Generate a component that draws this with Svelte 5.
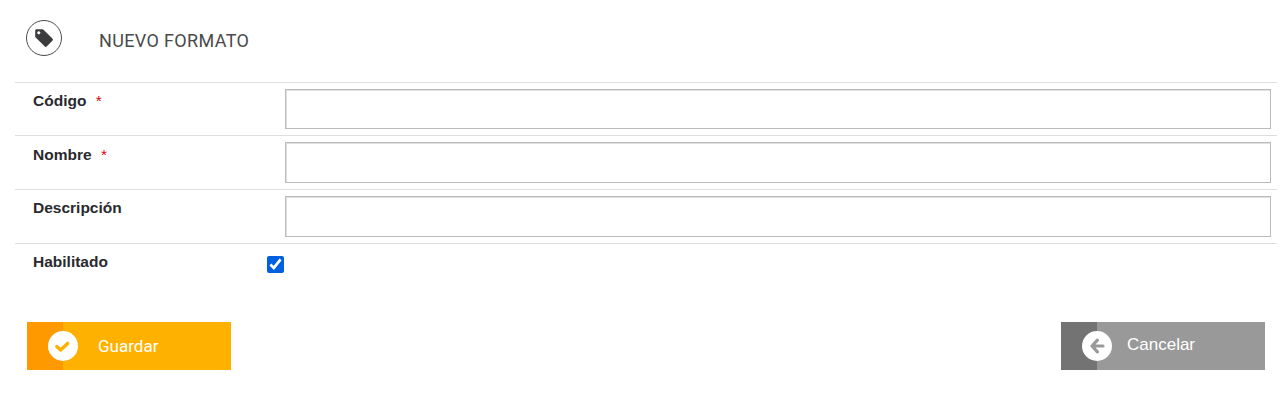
<script>
  let fields = [
    { label: "Código", required: true },
    { label: "Nombre", required: true },
    { label: "Descripción", required: false }
  ];
  let enabled = $state(true);
</script>

<div class="page">
  <div class="header">
    <span class="header_icon">
      <svg width="22" height="22" viewBox="0 0 22 22">
        <path fill="#3c3c3e" fill-rule="evenodd" d="M2.2 3.6 Q2.2 2.2 3.6 2.2 L9.4 2.2 Q10 2.2 10.5 2.7 L19.6 11.8 Q20.4 12.7 19.6 13.6 L13.6 19.6 Q12.7 20.4 11.8 19.6 L2.7 10.5 Q2.2 10 2.2 9.4 Z M5.8 4.2 A1.6 1.6 0 1 0 5.81 4.2 Z" />
      </svg>
    </span>
    <h1>NUEVO FORMATO</h1>
  </div>

  <div class="form">
    {#each fields as field}
      <div class="row">
        <label class="row_label" for={field.label}>
          {field.label}
          {#if field.required}<span class="required">*</span>{/if}
        </label>
        <input class="text_input" id={field.label} type="text" />
      </div>
    {/each}
    <div class="row row_check">
      <label class="row_label" for="habilitado">Habilitado</label>
      <input class="check" id="habilitado" type="checkbox" bind:checked={enabled} />
    </div>
  </div>

  <div class="buttons">
    <button class="btn btn_save">
      <span class="btn_side"></span>
      <span class="btn_circle">
        <svg width="18" height="18" viewBox="0 0 18 18">
          <path d="M2.8 9.6 L6.6 13 L13.6 6.4" fill="none" stroke="#ffb100" stroke-width="3.4" stroke-linecap="round" stroke-linejoin="round" />
        </svg>
      </span>
      <span class="btn_text">Guardar</span>
    </button>
    <button class="btn btn_cancel">
      <span class="btn_side"></span>
      <span class="btn_circle">
        <svg width="18" height="18" viewBox="0 0 18 18">
          <path d="M9.4 3.2 L4 9 L9.4 14.8 M4.4 9 L15 9" fill="none" stroke="#999" stroke-width="3.2" stroke-linecap="round" stroke-linejoin="round" />
        </svg>
      </span>
      <span class="btn_text">Cancelar</span>
    </button>
  </div>
</div>

<style>
  :global(body) {
    background: #fff;
  }
  .page {
    width: 1283px;
    height: 406px;
    padding: 0 6px 0 15px;
    box-sizing: border-box;
    overflow: hidden;
  }
  .header {
    display: flex;
    align-items: center;
    height: 81.6px;
    padding-left: 11px;
    box-sizing: border-box;
  }
  .header_icon {
    display: flex;
    align-items: center;
    justify-content: center;
    width: 36px;
    height: 36px;
    margin-top: -6px;
    border: 1px solid #4a4a4a;
    border-radius: 50%;
    box-sizing: border-box;
  }
  h1 {
    margin: 0 0 0 37px;
    font: 400 18px Roboto, sans-serif;
    letter-spacing: 0.35px;
    color: #4a4a4a;
  }
  .row {
    display: flex;
    align-items: flex-start;
    height: 53.7px;
    padding: 6px 6px 0 18px;
    border-top: 1px solid #dedede;
    box-sizing: border-box;
  }
  .row_label {
    width: 252px;
    flex: none;
    padding-top: 3.3px;
    font: 700 15.5px "Liberation Sans", Arial, sans-serif;
    color: #2a2a2e;
  }
  .required {
    margin-left: 5px;
    color: #e0000f;
    font-weight: 400;
  }
  .text_input {
    flex: 1;
    height: 40.7px;
    padding: 0 8px;
    border: 1px solid #bbb;
    border-radius: 0;
    box-sizing: border-box;
    background: #fff;
    box-shadow: inset 1px 1px 0 #e0e0e0;
    outline: none;
  }
  .row_check {
    height: 48px;
  }
  .check {
    width: 17px;
    height: 17px;
    margin: 6px 0 0 -18px;
    accent-color: #0060df;
  }
  .buttons {
    display: flex;
    justify-content: space-between;
    margin-top: 31px;
    padding: 0 12px;
  }
  .btn {
    display: flex;
    align-items: center;
    position: relative;
    width: 204px;
    height: 48px;
    padding: 0;
    border: none;
    color: #fff;
    cursor: pointer;
    font-size: 17px;
    text-align: left;
  }
  .btn_side {
    width: 36px;
    align-self: stretch;
    flex: none;
  }
  .btn_circle {
    position: absolute;
    left: 21px;
    top: 9px;
    display: flex;
    align-items: center;
    justify-content: center;
    width: 30px;
    height: 30px;
    border-radius: 50%;
    background: #fff;
  }
  .btn_save {
    background: #ffb100;
    font-family: Roboto, sans-serif;
  }
  .btn_save .btn_side {
    background: #ff9900;
  }
  .btn_save .btn_text {
    margin-left: 35px;
  }
  .btn_cancel {
    background: #999;
    font-family: "Liberation Sans", Arial, sans-serif;
  }
  .btn_cancel .btn_side {
    background: #737373;
  }
  .btn_cancel .btn_text {
    margin: -2px 0 0 30px;
  }
</style>
